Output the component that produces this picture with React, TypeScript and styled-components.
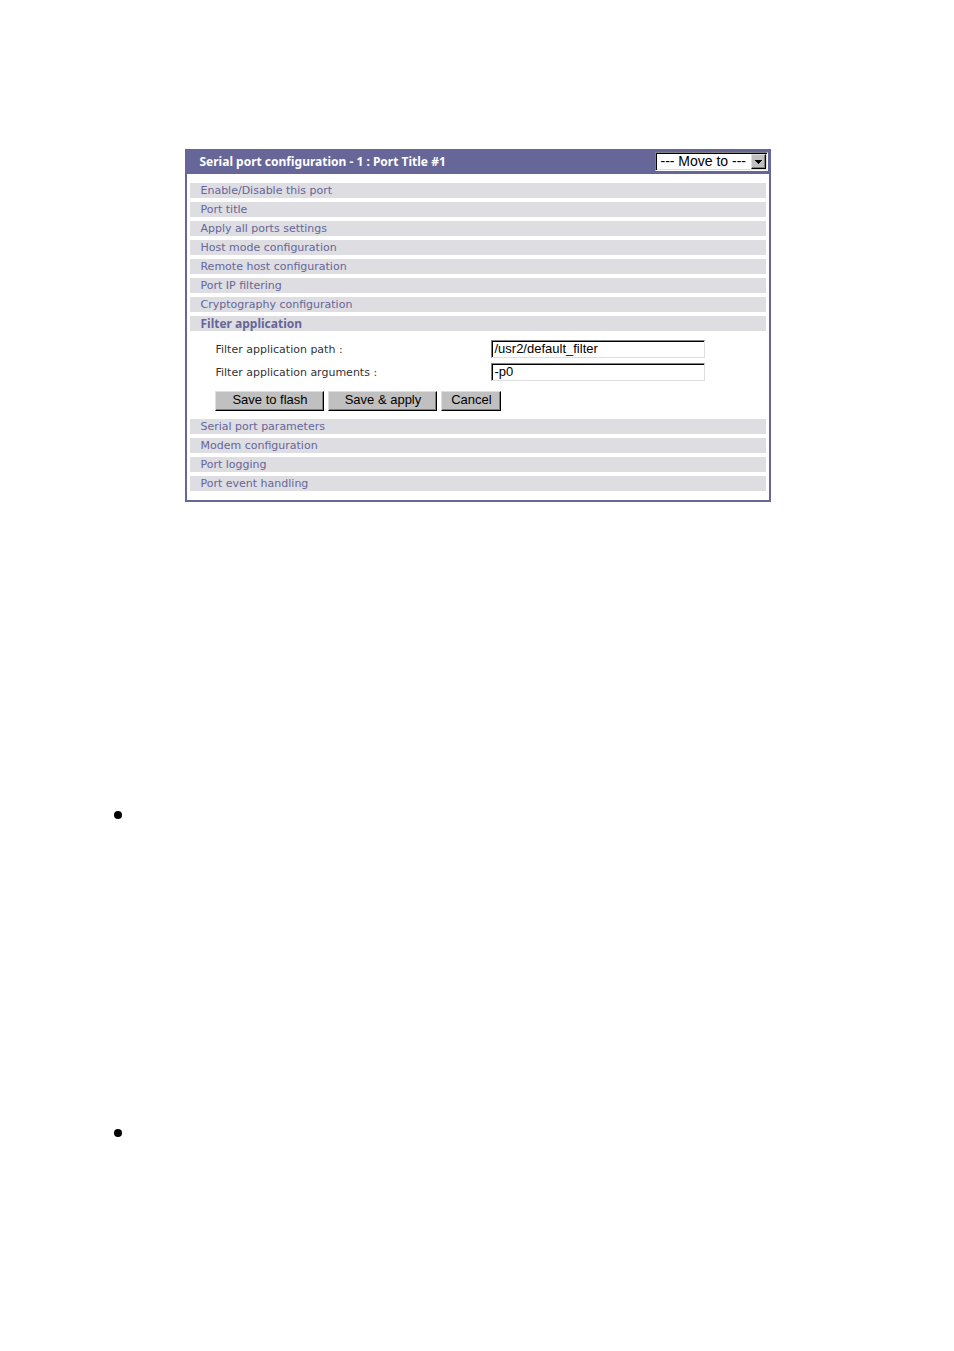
import React, { useState } from 'react'
import styled, { createGlobalStyle } from 'styled-components'

const GlobalStyle = createGlobalStyle`
  * {
    box-sizing: border-box;
  }

  body {
    margin: 0;
    background: #fff;
    font-family: "DejaVu Sans", Verdana, sans-serif;
    font-size: 11px;
  }
`

const Page = styled.main`
  min-height: 100vh;
  padding: 149px 12% 0;
`

const Panel = styled.section`
  max-width: 586px;
  margin: 0 auto 0 71px;
  border: 2px solid #666699;
  border-top: 0;
  background: #fff;
`

const Header = styled.header`
  display: flex;
  align-items: center;
  justify-content: space-between;
  height: 25px;
  padding: 0 1px 0 12px;
  background: #666699;
`

const Title = styled.h1`
  margin: 0;
  color: #fff;
  font: bold 12px/15px "Noto Sans", Verdana, sans-serif;
`

const SelectBox = styled.div`
  position: relative;
  width: 113px;
  height: 19px;
  border: 1px solid;
  border-color: #808080 #fff #fff #808080;
  box-shadow: inset 1px 1px #000, inset -1px -1px #dedede;
  padding: 1px;
  background: #fff;
`

const Select = styled.select`
  display: block;
  appearance: none;
  width: 100%;
  height: 15px;
  padding: 0 0 0 3px;
  border: 0;
  outline: 0;
  background: transparent;
  color: #000;
  font: 14px/15px "Liberation Sans", Arial, sans-serif;
`

const SelectArrow = styled.span`
  position: absolute;
  top: 1px;
  right: 1px;
  display: flex;
  align-items: center;
  justify-content: center;
  width: 15px;
  height: 15px;
  border: 1px solid;
  border-color: #dedede #000 #000 #dedede;
  box-shadow: inset -1px -1px #808080;
  background: #c0c0c0;
  pointer-events: none;
`

const Sections = styled.div`
  display: flex;
  flex-direction: column;
  gap: 4px;
  padding: 9px 3px;
`

const SectionLink = styled.a<{ $active?: boolean }>`
  height: 15px;
  padding-left: 10px;
  background: #dddde2;
  color: #666699;
  font: ${props => (props.$active
    ? 'bold 12px/15px "Noto Sans", Verdana, sans-serif'
    : '11px/15px "DejaVu Sans", Verdana, sans-serif')};
  text-decoration: none;
`

const Form = styled.form`
  padding: 5px 0 4px 25px;
`

const Field = styled.div`
  display: grid;
  grid-template-columns: 276px minmax(0, 214px);
  align-items: center;
  margin-bottom: 5px;
`

const Label = styled.label`
  color: #333;
`

const Input = styled.input`
  width: 100%;
  height: 18px;
  padding: 0 2px 2px;
  border: 1px solid;
  border-color: #808080 #dedede #dedede #808080;
  border-radius: 0;
  box-shadow: inset 1px 1px #000;
  outline: 0;
  background: #fff;
  color: #000;
  font: 13px/14px "Liberation Sans", Arial, sans-serif;
`

const Buttons = styled.div`
  display: flex;
  gap: 4px;
  padding-top: 5px;
`

const Button = styled.button<{ $small?: boolean }>`
  width: ${props => (props.$small ? '60px' : '109px')};
  height: 20px;
  padding: 0 0 2px;
  border: 1px solid;
  border-color: #dedede #000 #000 #dedede;
  box-shadow: inset -1px -1px #808080;
  background: #c0c0c0;
  color: #000;
  font: 13px/16px "Liberation Sans", Arial, sans-serif;
`

const Notes = styled.ul`
  display: grid;
  gap: 302px;
  margin: 309px 0 0;
  padding: 0;
  list-style: none;
`

const Note = styled.li`
  height: 16px;

  &::before {
    content: '';
    display: block;
    width: 8px;
    height: 8px;
    border-radius: 50%;
    background: #000;
  }
`

const before = [
  'Enable/Disable this port',
  'Port title',
  'Apply all ports settings',
  'Host mode configuration',
  'Remote host configuration',
  'Port IP filtering',
  'Cryptography configuration',
]

const after = [
  'Serial port parameters',
  'Modem configuration',
  'Port logging',
  'Port event handling',
]

const App = () => {
  const [path, setPath] = useState('/usr2/default_filter')
  const [args, setArgs] = useState('-p0')

  return (
    <Page>
      <GlobalStyle />
      <Panel>
        <Header>
          <Title>Serial port configuration - 1 : Port Title #1</Title>
          <SelectBox>
            <Select aria-label="Move to">
              <option>--- Move to ---</option>
            </Select>
            <SelectArrow>
              <svg width="7" height="4" viewBox="0 0 7 4" shapeRendering="crispEdges">
                <path d="M0 0h7v1h-1v1h-1v1h-1v1h-1v-1h-1v-1h-1v-1h-1z" fill="#000" />
              </svg>
            </SelectArrow>
          </SelectBox>
        </Header>
        <Sections>
          {before.map(name => (
            <SectionLink key={name} href="#">{name}</SectionLink>
          ))}
          <SectionLink href="#" $active>Filter application</SectionLink>
          <Form onSubmit={e => e.preventDefault()}>
            <Field>
              <Label htmlFor="path">Filter application path :</Label>
              <Input id="path" value={path} onChange={e => setPath(e.target.value)} />
            </Field>
            <Field>
              <Label htmlFor="args">Filter application arguments :</Label>
              <Input id="args" value={args} onChange={e => setArgs(e.target.value)} />
            </Field>
            <Buttons>
              <Button type="submit">Save to flash</Button>
              <Button type="submit">Save &amp; apply</Button>
              <Button type="button" $small>Cancel</Button>
            </Buttons>
          </Form>
          {after.map(name => (
            <SectionLink key={name} href="#">{name}</SectionLink>
          ))}
        </Sections>
      </Panel>
      <Notes>
        <Note />
        <Note />
      </Notes>
    </Page>
  )
}

export default App
